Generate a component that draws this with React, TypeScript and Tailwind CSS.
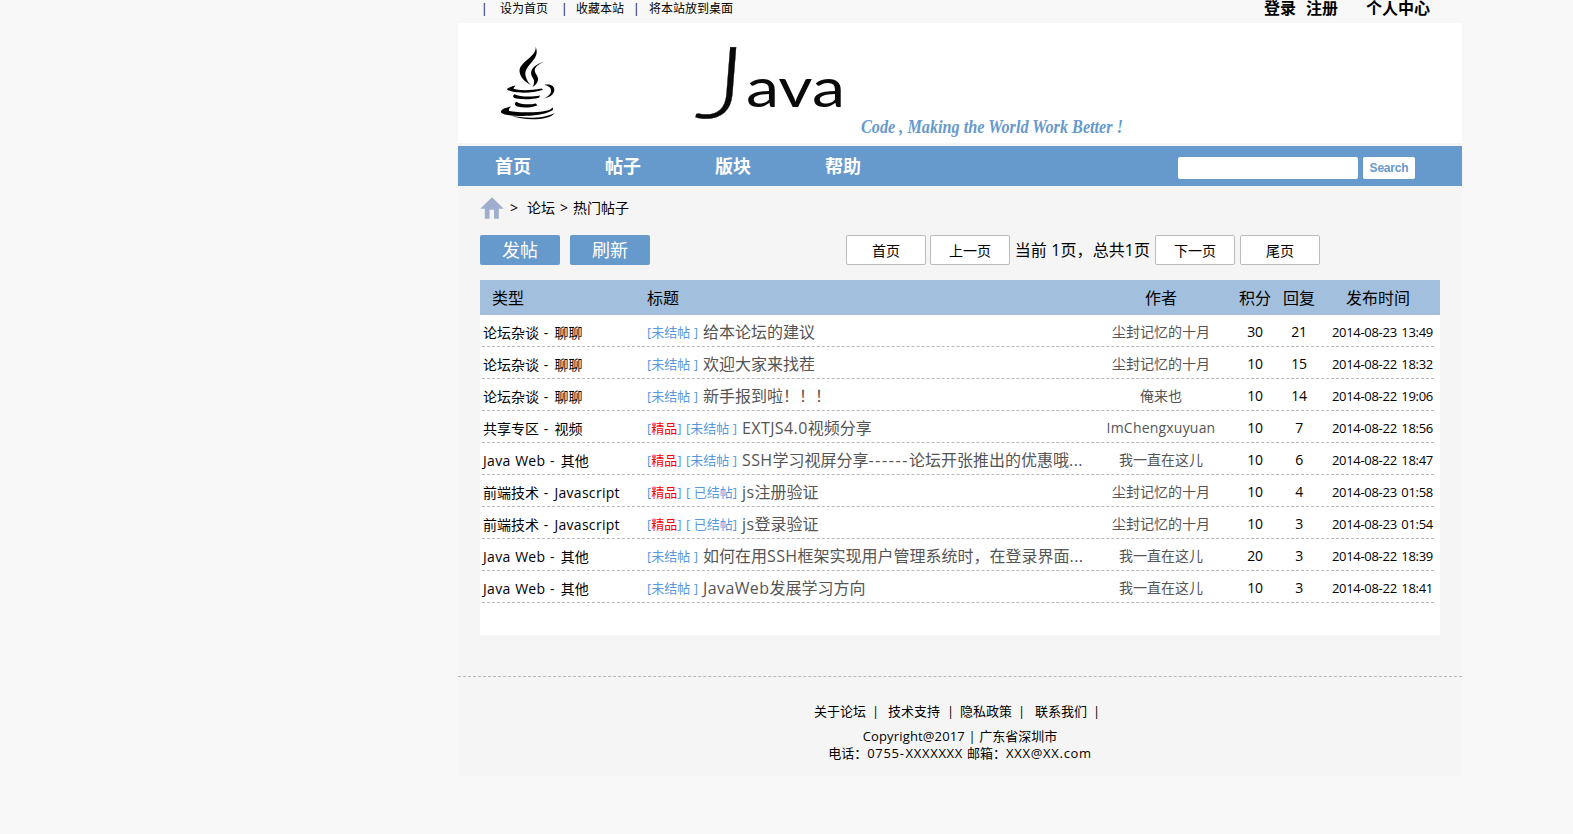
import React from "react";

type Post = {
  kind: string;
  best?: boolean;
  state: string;
  title: string;
  author: string;
  score: number;
  replies: number;
  time: string;
};

const OPEN = "[未结帖 ]";
const DONE = "[ 已结帖]";

const posts: Post[] = [
  { kind: "论坛杂谈 - 聊聊", state: OPEN, title: "给本论坛的建议", author: "尘封记忆的十月", score: 30, replies: 21, time: "2014-08-23 13:49" },
  { kind: "论坛杂谈 - 聊聊", state: OPEN, title: "欢迎大家来找茬", author: "尘封记忆的十月", score: 10, replies: 15, time: "2014-08-22 18:32" },
  { kind: "论坛杂谈 - 聊聊", state: OPEN, title: "新手报到啦！！！", author: "俺来也", score: 10, replies: 14, time: "2014-08-22 19:06" },
  { kind: "共享专区 - 视频", best: true, state: OPEN, title: "EXTJS4.0视频分享", author: "ImChengxuyuan", score: 10, replies: 7, time: "2014-08-22 18:56" },
  { kind: "Java Web - 其他", best: true, state: OPEN, title: "SSH学习视屏分享------论坛开张推出的优惠哦...", author: "我一直在这儿", score: 10, replies: 6, time: "2014-08-22 18:47" },
  { kind: "前端技术 - Javascript", best: true, state: DONE, title: "js注册验证", author: "尘封记忆的十月", score: 10, replies: 4, time: "2014-08-23 01:58" },
  { kind: "前端技术 - Javascript", best: true, state: DONE, title: "js登录验证", author: "尘封记忆的十月", score: 10, replies: 3, time: "2014-08-23 01:54" },
  { kind: "Java Web - 其他", state: OPEN, title: "如何在用SSH框架实现用户管理系统时，在登录界面...", author: "我一直在这儿", score: 20, replies: 3, time: "2014-08-22 18:39" },
  { kind: "Java Web - 其他", state: OPEN, title: "JavaWeb发展学习方向", author: "我一直在这儿", score: 10, replies: 3, time: "2014-08-22 18:41" },
];

/* Loosens Latin runs and dashes, leaves Chinese characters on their own grid. */
function Mixed({ text, latin }: { text: string; latin: string }) {
  const parts = text.split(/(-+|[\x20-\x2c\x2e-\x7e]+)/).filter(Boolean);
  return (
    <>
      {parts.map((s, i) =>
        s[0] === "-" ? (
          <span key={i} className="tracking-[1.6px]">{s}</span>
        ) : s.charCodeAt(0) < 127 ? (
          <span key={i} className={latin}>{s}</span>
        ) : (
          s
        )
      )}
    </>
  );
}

function Banner() {
  return (
    <svg width="1004" height="120" viewBox="458 23 1004 120" className="block shrink-0 bg-white">
      {/* coffee cup */}
      <g transform="translate(495 41.5) scale(0.33333)" fill="#000">
        <path d="M122 16c8 20 0 32-12 46-13 15-22 26-18 42 3 12 9 20 16 27-15-9-31-21-34-39-3-17 12-28 28-42 14-12 21-20 20-34z" />
        <path d="M148 60c-16 5-30 12-37 24-6 11-1 20 5 30 3 7 1 15-4 23 10-6 18-15 17-26-1-10-13-18-9-29 4-10 16-16 28-22z" />
        <path d="M62 132c-13 3-25 7-26 11 8 12 72 15 108 2l-4-4c-34 7-72 6-84 1-2-2 3-6 6-10z" />
        <path d="M148 130c14-4 30 1 30 14 0 14-14 24-31 27 14-7 22-15 21-25-1-9-10-13-20-16z" />
        <path d="M58 158c-7 6-3 11 6 13 22 4 48 3 68-2l3-7c-22 4-60 5-77-4z" />
        <path d="M64 181c-8 6-3 13 6 15 18 4 42 2 57-4l-4-6c-18 4-46 4-59-5z" />
        <path d="M48 195c-17 3-31 9-30 17 4 13 110 19 152-4 5-3 5-7 2-10-5 9-25 13-57 14-34 1-70-1-73-5-1-4 1-7 6-12z" />
        <path d="M48 222c42 10 98 9 130-7-14 21-88 25-130 7z" />
      </g>
      {/* wordmark */}
      <g fill="#0a0a0a" fontFamily="Lato, sans-serif">
        <text transform="translate(694 118) scale(1.15 1) skewX(-4)" fontSize="100" fontWeight="300" stroke="#0a0a0a" strokeWidth="0.3">J</text>
        <text x="746" y="107" fontSize="54" fontWeight="400" textLength="99" lengthAdjust="spacingAndGlyphs">ava</text>
      </g>
      <text x="861" y="133" fontSize="18" fontStyle="italic" fontWeight="bold" fontFamily="'Liberation Serif', serif" fill="#6699cc" textLength="262" lengthAdjust="spacingAndGlyphs">
        Code , Making the World Work Better !
      </text>
    </svg>
  );
}

function PageButton({ label }: { label: string }) {
  return (
    <button className="flex h-[30px] w-[80px] items-center justify-center rounded-[2px] border border-[#bbbbbb] bg-white text-[14px]">
      {label}
    </button>
  );
}

export default function App() {
  return (
    <div className="h-[834px] w-[1573px] overflow-hidden bg-[#f8f8f8] pl-[458px] font-['Open_Sans','Noto_Sans_CJK_SC',sans-serif] text-black">
      <div className="flex h-[776px] w-[1004px] flex-col whitespace-nowrap bg-[#f5f5f5]">
        <div className="flex h-[23px] shrink-0 items-start bg-[#f8f8f8] text-[12px] leading-[17px]">
          <span className="ml-[23px] w-[19px]">|</span>
          <span className="w-[61px]">设为首页</span>
          <span className="w-[15px]">|</span>
          <span className="w-[57px]">收藏本站</span>
          <span className="w-[16px]">|</span>
          <span>将本站放到桌面</span>
          <span className="mr-[32px] ml-auto flex text-[16px] font-semibold">
            <span className="w-[42px]">登录</span>
            <span className="w-[60px]">注册</span>
            <span>个人中心</span>
          </span>
        </div>

        <Banner />

        <nav className="mt-[3px] flex h-[40px] shrink-0 items-center bg-[#6699cc] pl-[37px] text-[18px] font-bold text-white">
          <span className="w-[110px]">首页</span>
          <span className="w-[110px]">帖子</span>
          <span className="w-[110px]">版块</span>
          <span>帮助</span>
          <div className="mt-[3px] mr-[47px] ml-auto flex gap-[5px]">
            <input className="h-[22px] w-[180px] rounded-[2px] bg-white outline-none" />
            <button className="h-[22px] w-[52px] rounded-[2px] bg-white font-['Liberation_Sans',sans-serif] text-[12px] font-bold tracking-[-0.2px] text-[#6699cc]">
              Search
            </button>
          </div>
        </nav>

        <div className="flex h-[49px] shrink-0 items-start pt-[11px] pl-[22px] text-[14px] leading-[22px]">
          <svg width="24" height="22" viewBox="0 0 24 22" className="w-[30px] shrink-0 pr-[6px]" fill="#a0aecd">
            <path d="M12 0.3 23.7 11.8H18.8V21.7H14V12.8H9.6V21.7H4.8V11.8H0.3Z" />
          </svg>
          <span className="w-[17px]">&gt;</span>
          <span className="w-[33px]">论坛</span>
          <span className="w-[13px]">&gt;</span>
          <span>热门帖子</span>
        </div>

        <div className="flex h-[45px] shrink-0 items-start pl-[22px]">
          <button className="mr-[10px] h-[30px] w-[80px] rounded-[2px] bg-[#6699cc] text-[18px] leading-[30px] text-white">发帖</button>
          <button className="h-[30px] w-[80px] rounded-[2px] bg-[#6699cc] text-[18px] leading-[30px] text-white">刷新</button>
          <div className="ml-[196px] flex items-center">
            <PageButton label="首页" />
            <span className="w-[4px]" />
            <PageButton label="上一页" />
            <span className="w-[145px] text-center text-[16px] tracking-[0.1px]">当前 1页，总共1页</span>
            <PageButton label="下一页" />
            <span className="w-[5px]" />
            <PageButton label="尾页" />
          </div>
        </div>

        <div className="ml-[22px] h-[355px] w-[960px] shrink-0 bg-white">
          <div className="flex h-[35px] items-center bg-[#a2c0de] pl-[12px] text-[16px]">
            <span className="w-[155px]">类型</span>
            <span className="w-[453px]">标题</span>
            <span className="w-[122px] text-center">作者</span>
            <span className="ml-[11px] w-[44px] text-center">积分</span>
            <span className="w-[44px] text-center">回复</span>
            <span className="w-[114px] text-center">发布时间</span>
          </div>
          {posts.map((p, i) => (
            <div key={i} className="ml-[2px] flex h-[32px] w-[952px] items-end border-b border-dashed border-[#b8b8b8] pb-[2px] leading-[22px]">
              <span className="w-[165px] pl-px text-[14px]">
                <Mixed text={p.kind} latin="tracking-[0.3px] [word-spacing:0.7px]" />
              </span>
              <span className="mb-px flex w-[453px] text-[16px] text-[#555555]">
                {p.best && (
                  <span className="w-[39px] text-[13px] text-[#5599dd]">
                    [<span className="text-[#ff0000]">精品</span>]
                  </span>
                )}
                <span className="w-[56px] text-[13px] text-[#5599dd]">{p.state}</span>
                <span>
                  <Mixed text={p.title} latin="tracking-[0.4px]" />
                </span>
              </span>
              <span className="mb-px w-[122px] text-center text-[14px] text-[#555555]">
                <Mixed text={p.author} latin="tracking-[0.2px]" />
              </span>
              <span className="mb-px ml-[11px] w-[44px] text-center text-[14px] tracking-[-0.3px]">{p.score}</span>
              <span className="mb-px w-[44px] text-center text-[14px] tracking-[-0.3px]">{p.replies}</span>
              <span className="mb-px w-[112px] text-right text-[13px] tracking-[-0.3px] [word-spacing:1.5px]">{p.time}</span>
            </div>
          ))}
        </div>

        <footer className="mt-[41px] border-t border-dashed border-[#b8b8b8] text-[13px]">
          <div className="mt-[24px] flex pl-[356px] leading-[20px]">
            <span className="w-[58px]">关于论坛</span>
            <span className="w-[16px]">|</span>
            <span className="w-[59px]">技术支持</span>
            <span className="w-[13px]">|</span>
            <span className="w-[58px]">隐私政策</span>
            <span className="w-[17px]">|</span>
            <span className="w-[58px]">联系我们</span>
            <span>|</span>
          </div>
          <div className="mt-[7px] text-center leading-[17px]">
            <div>
              <Mixed text="Copyright@2017 | 广东省深圳市" latin="tracking-[0.15px]" />
            </div>
            <div>
              <Mixed text="电话：0755-XXXXXXX 邮箱：XXX@XX.com" latin="tracking-[0.7px]" />
            </div>
          </div>
        </footer>
      </div>
    </div>
  );
}
